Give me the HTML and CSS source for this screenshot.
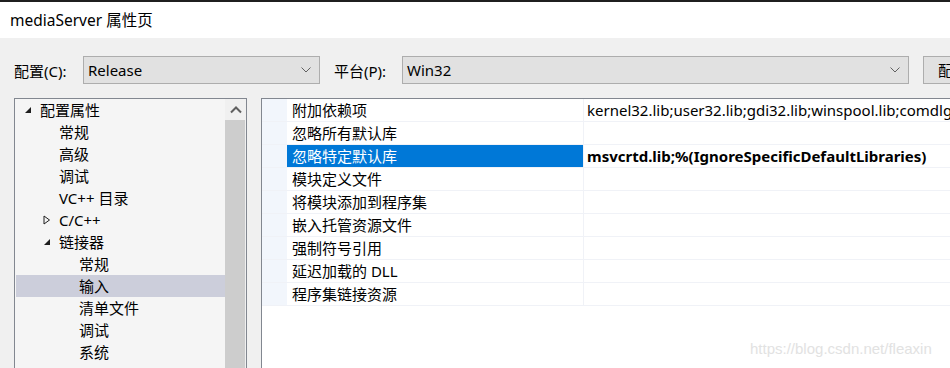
FILE: index.html
```html
<!DOCTYPE html>
<html>
<head>
<meta charset="utf-8">
<link rel="stylesheet" href="styles.css">
</head>
<body>
  <div class="topline"></div>
  <div class="titlebar">mediaServer 属性页</div>

  <div class="toolbar">
    <span class="lbl">配置(C):</span>
    <div class="combo combo-cfg">
      <span>Release</span>
      <svg class="chev" width="10" height="6" viewBox="0 0 10 6"><path d="M0.5 0.5 L5 5 L9.5 0.5" fill="none" stroke="#606060" stroke-width="1"/></svg>
    </div>
    <span class="lbl lbl-plat">平台(P):</span>
    <div class="combo combo-plat">
      <span>Win32</span>
      <svg class="chev" width="10" height="6" viewBox="0 0 10 6"><path d="M0.5 0.5 L5 5 L9.5 0.5" fill="none" stroke="#606060" stroke-width="1"/></svg>
    </div>
    <div class="btn">配置管理器(O)...</div>
  </div>

  <div class="main">
    <div class="tree">
      <div class="tree-list">
        <div class="node lv0"><svg class="tri" width="8" height="8" viewBox="0 0 8 8"><path d="M7 1 L7 7 L1 7 Z" fill="#1e1e1e"/></svg>配置属性</div>
        <div class="node lv1">常规</div>
        <div class="node lv1">高级</div>
        <div class="node lv1">调试</div>
        <div class="node lv1">VC++ 目录</div>
        <div class="node lv1 has"><svg class="tri" width="8" height="10" viewBox="0 0 8 10"><path d="M1 1 L6.5 5 L1 9 Z" fill="none" stroke="#1e1e1e" stroke-width="1"/></svg>C/C++</div>
        <div class="node lv1 has"><svg class="tri" width="8" height="8" viewBox="0 0 8 8"><path d="M7 1 L7 7 L1 7 Z" fill="#1e1e1e"/></svg>链接器</div>
        <div class="node lv2">常规</div>
        <div class="node lv2 sel">输入</div>
        <div class="node lv2">清单文件</div>
        <div class="node lv2">调试</div>
        <div class="node lv2">系统</div>
      </div>
      <div class="vscroll">
        <div class="arrow"><svg width="12" height="8" viewBox="0 0 12 8"><path d="M1 6.5 L6 1.5 L11 6.5" fill="none" stroke="#606060" stroke-width="2"/></svg></div>
        <div class="thumb"></div>
      </div>
    </div>

    <div class="grid">
      <div class="row"><div class="margin"></div><div class="name">附加依赖项</div><div class="val">kernel32.lib;user32.lib;gdi32.lib;winspool.lib;comdlg32.lib;advapi32.lib</div></div>
      <div class="row"><div class="margin"></div><div class="name">忽略所有默认库</div><div class="val"></div></div>
      <div class="row sel"><div class="margin"></div><div class="name">忽略特定默认库</div><div class="val bold">msvcrtd.lib;%(IgnoreSpecificDefaultLibraries)</div></div>
      <div class="row"><div class="margin"></div><div class="name">模块定义文件</div><div class="val"></div></div>
      <div class="row"><div class="margin"></div><div class="name">将模块添加到程序集</div><div class="val"></div></div>
      <div class="row"><div class="margin"></div><div class="name">嵌入托管资源文件</div><div class="val"></div></div>
      <div class="row"><div class="margin"></div><div class="name">强制符号引用</div><div class="val"></div></div>
      <div class="row"><div class="margin"></div><div class="name">延迟加载的 DLL</div><div class="val"></div></div>
      <div class="row"><div class="margin"></div><div class="name">程序集链接资源</div><div class="val"></div></div>
    </div>
  </div>

  <div class="watermark">https://blog.csdn.net/fleaxin</div>
</body>
</html>
```

FILE: styles.css
```css
html, body {
  margin: 0;
  padding: 0;
}
body {
  width: 950px;
  height: 368px;
  overflow: hidden;
  background: #f0f0f0;
  font-family: "Noto Sans", "Noto Sans CJK SC", sans-serif;
  font-size: 15px;
  color: #000;
  position: relative;
}
.topline {
  height: 2px;
  background: #1f1f1f;
}
.titlebar {
  height: 36px;
  background: #fff;
  padding-left: 10px;
  font-size: 15.5px;
  line-height: 36px;
  white-space: nowrap;
}
.toolbar {
  display: flex;
  align-items: center;
  height: 28px;
  margin-top: 18px;
  padding-left: 14px;
  white-space: nowrap;
}
.toolbar > * {
  flex: none;
}
.lbl {
  width: 69px;
}
.lbl-plat {
  width: 68px;
  margin-left: 14px;
}
.combo {
  box-sizing: border-box;
  height: 28px;
  background: #e1e1e1;
  border: 1px solid #adadad;
  display: flex;
  align-items: center;
  justify-content: space-between;
  padding: 0 8px 0 4px;
}
.combo-cfg {
  width: 237px;
}
.combo-plat {
  width: 507px;
}
.chev {
  display: block;
}
.btn {
  box-sizing: border-box;
  height: 28px;
  margin-left: 14px;
  padding: 0 14px;
  background: #e1e1e1;
  border: 1px solid #adadad;
  line-height: 26px;
}
.main {
  display: flex;
  margin-top: 14px;
  padding-left: 14px;
  gap: 14px;
  height: 300px;
}
.tree {
  box-sizing: border-box;
  width: 233px;
  flex: none;
  border: 1px solid #828790;
  background: #f5f5f5;
  display: flex;
}
.tree-list {
  flex: 1;
  padding-left: 1px;
}
.node {
  height: 22px;
  line-height: 22px;
  display: flex;
  align-items: center;
  white-space: nowrap;
}
.node .tri {
  margin-right: 8px;
}
.lv0 {
  padding-left: 8px;
}
.lv1 {
  padding-left: 43px;
}
.lv1.has {
  padding-left: 27px;
}
.lv2 {
  padding-left: 63px;
}
.node.sel {
  background: #cccedb;
}
.vscroll {
  width: 21px;
  background: #f0f0f0;
  display: flex;
  flex-direction: column;
}
.vscroll .arrow {
  height: 21px;
  display: flex;
  align-items: center;
  justify-content: center;
}
.vscroll .thumb {
  flex: 1;
  background: #cdcdcd;
  margin: 0 1px 0 0;
}
.grid {
  flex: none;
  width: 720px;
  border-left: 1px solid #828790;
  border-top: 1px solid #828790;
  background: #fff;
}
.row {
  display: flex;
  height: 22px;
  border-bottom: 1px solid #f0f2f7;
  white-space: nowrap;
}
.row .margin {
  width: 25px;
  flex: none;
  background: #f2f6fc;
}
.row .name {
  width: 291px;
  flex: none;
  padding-left: 5px;
  line-height: 22px;
  border-right: 1px solid #f0f2f7;
}
.row .val {
  flex: 1;
  padding-left: 3px;
  line-height: 22px;
  overflow: hidden;
}
.row.sel .name {
  background: #0078d7;
  color: #fff;
}
.row.sel .val {
  border-left: 3px solid #0078d7;
  margin-left: -4px;
  padding-left: 4px;
}
.bold {
  font-weight: bold;
}
.watermark {
  position: absolute;
  left: 750px;
  top: 340px;
  font-family: "Liberation Sans", Arial, sans-serif;
  font-size: 15px;
  color: #e2e2e2;
}
```
